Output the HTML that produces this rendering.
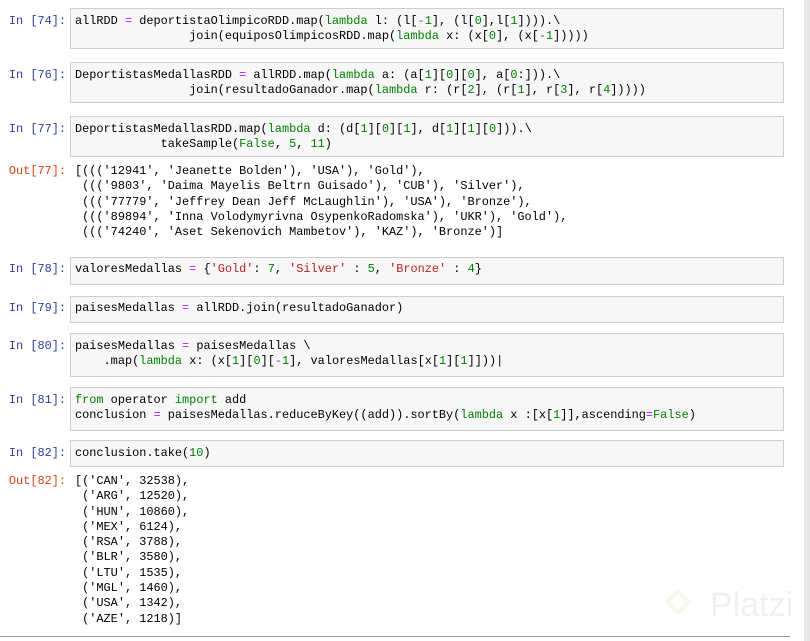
<!DOCTYPE html>
<html><head><meta charset="utf-8"><style>
body{margin:0;width:810px;height:641px;background:#fff;position:relative;overflow:hidden;font-family:"Liberation Mono",monospace;font-size:11.9px;}
.p{position:absolute;left:0;width:66px;text-align:right;color:#303f9f;line-height:15px;}
.o{color:#d84315;}
.b{position:absolute;left:70px;width:714px;background:#f7f7f7;border:1px solid #cfcfcf;box-sizing:border-box;}
pre{margin:0;font:inherit;line-height:15px;position:absolute;left:75px;color:#000;white-space:pre;}
.k{color:#008000}.s{color:#ba2121}.n{color:#008000}.e{color:#aa22ff}
.out{line-height:15.3px;}
</style></head><body>
<div class="b" style="top:8px;height:41px"></div>
<div class="p" style="top:14px">In [74]:</div>
<pre style="top:14px">allRDD <span class="e">=</span> deportistaOlimpicoRDD.map(<span class="k">lambda</span> l: (l[<span class="e">-</span><span class="n">1</span>], (l[<span class="n">0</span>],l[<span class="n">1</span>]))).\
                join(equiposOlimpicosRDD.map(<span class="k">lambda</span> x: (x[<span class="n">0</span>], (x[<span class="e">-</span><span class="n">1</span>]))))</pre>

<div class="b" style="top:62px;height:41px"></div>
<div class="p" style="top:68px">In [76]:</div>
<pre style="top:68px">DeportistasMedallasRDD <span class="e">=</span> allRDD.map(<span class="k">lambda</span> a: (a[<span class="n">1</span>][<span class="n">0</span>][<span class="n">0</span>], a[<span class="n">0</span>:])).\
                join(resultadoGanador.map(<span class="k">lambda</span> r: (r[<span class="n">2</span>], (r[<span class="n">1</span>], r[<span class="n">3</span>], r[<span class="n">4</span>]))))</pre>

<div class="b" style="top:116px;height:41px"></div>
<div class="p" style="top:122px">In [77]:</div>
<pre style="top:122px">DeportistasMedallasRDD.map(<span class="k">lambda</span> d: (d[<span class="n">1</span>][<span class="n">0</span>][<span class="n">1</span>], d[<span class="n">1</span>][<span class="n">1</span>][<span class="n">0</span>])).\
            takeSample(<span class="k">False</span>, <span class="n">5</span>, <span class="n">11</span>)</pre>

<div class="p o" style="top:164px">Out[77]:</div>
<pre class="out" style="top:164px">[((('12941', 'Jeanette Bolden'), 'USA'), 'Gold'),
 ((('9803', 'Daima Mayelis Beltrn Guisado'), 'CUB'), 'Silver'),
 ((('77779', 'Jeffrey Dean Jeff McLaughlin'), 'USA'), 'Bronze'),
 ((('89894', 'Inna Volodymyrivna OsypenkoRadomska'), 'UKR'), 'Gold'),
 ((('74240', 'Aset Sekenovich Mambetov'), 'KAZ'), 'Bronze')]</pre>

<div class="b" style="top:257px;height:28px"></div>
<div class="p" style="top:262px">In [78]:</div>
<pre style="top:262px">valoresMedallas <span class="e">=</span> {<span class="s">'Gold'</span>: <span class="n">7</span>, <span class="s">'Silver'</span> : <span class="n">5</span>, <span class="s">'Bronze'</span> : <span class="n">4</span>}</pre>

<div class="b" style="top:296px;height:27px"></div>
<div class="p" style="top:301px">In [79]:</div>
<pre style="top:301px">paisesMedallas <span class="e">=</span> allRDD.join(resultadoGanador)</pre>

<div class="b" style="top:333px;height:44px"></div>
<div class="p" style="top:339px">In [80]:</div>
<pre style="top:339px">paisesMedallas <span class="e">=</span> paisesMedallas \
    .map(<span class="k">lambda</span> x: (x[<span class="n">1</span>][<span class="n">0</span>][<span class="e">-</span><span class="n">1</span>], valoresMedallas[x[<span class="n">1</span>][<span class="n">1</span>]]))|</pre>

<div class="b" style="top:387px;height:44px"></div>
<div class="p" style="top:393px">In [81]:</div>
<pre style="top:393px"><span class="k">from</span> operator <span class="k">import</span> add
conclusion <span class="e">=</span> paisesMedallas.reduceByKey((add)).sortBy(<span class="k">lambda</span> x :[x[<span class="n">1</span>]],ascending<span class="e">=</span><span class="k">False</span>)</pre>

<div class="b" style="top:440px;height:27px"></div>
<div class="p" style="top:446px">In [82]:</div>
<pre style="top:446px">conclusion.take(<span class="n">10</span>)</pre>

<div class="p o" style="top:474px">Out[82]:</div>
<pre class="out" style="top:474px">[('CAN', 32538),
 ('ARG', 12520),
 ('HUN', 10860),
 ('MEX', 6124),
 ('RSA', 3788),
 ('BLR', 3580),
 ('LTU', 1535),
 ('MGL', 1460),
 ('USA', 1342),
 ('AZE', 1218)]</pre>

<div style="position:absolute;left:668px;top:592px;width:20px;height:20px;border:5px solid #f5f8ec;transform:rotate(45deg);border-radius:4px;box-sizing:border-box"></div>
<div style="position:absolute;left:710px;top:586px;font-family:'Liberation Sans',sans-serif;font-size:34px;color:#f0f0f0">Platzi</div>
<div style="position:absolute;left:0;top:636px;width:790px;height:1px;background:#999"></div>
<div style="position:absolute;left:804px;top:0;width:6px;height:641px;background:#e8e8e8"></div>
</body></html>
